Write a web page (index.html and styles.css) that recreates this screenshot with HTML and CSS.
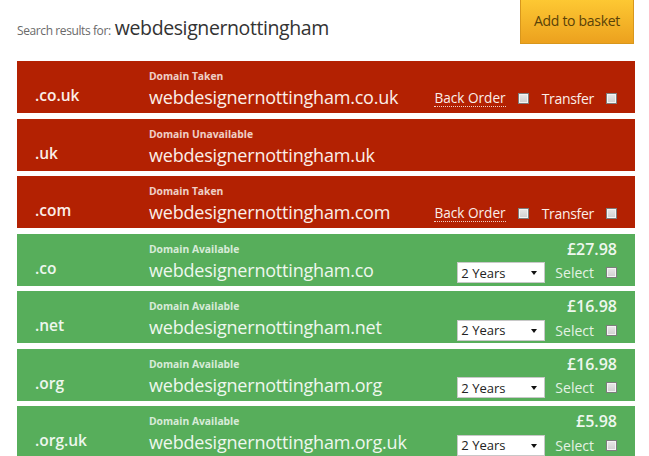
FILE: index.html
```html
<!DOCTYPE html>
<html>
<head>
<meta charset="utf-8">
<link rel="stylesheet" href="styles.css">
</head>
<body>
<div class="page">
  <header class="top">
    <div class="query"><span class="q-label">Search results for:</span> <span class="q-term">webdesignernottingham</span></div>
    <button class="basket">Add to basket</button>
  </header>
  <div class="results">
    <div class="row taken">
      <div class="tld">.co.uk</div>
      <div class="info"><div class="status">Domain Taken</div><div class="name">webdesignernottingham.co.uk</div></div>
      <div class="actions"><div class="opts"><span class="bo">Back Order</span><input type="checkbox" class="cb"><span class="tr">Transfer</span><input type="checkbox" class="cb"></div></div>
    </div>
    <div class="row taken">
      <div class="tld">.uk</div>
      <div class="info"><div class="status">Domain Unavailable</div><div class="name">webdesignernottingham.uk</div></div>
      <div class="actions"></div>
    </div>
    <div class="row taken">
      <div class="tld">.com</div>
      <div class="info"><div class="status">Domain Taken</div><div class="name">webdesignernottingham.com</div></div>
      <div class="actions"><div class="opts"><span class="bo">Back Order</span><input type="checkbox" class="cb"><span class="tr">Transfer</span><input type="checkbox" class="cb"></div></div>
    </div>
    <div class="row avail">
      <div class="tld">.co</div>
      <div class="info"><div class="status">Domain Available</div><div class="name">webdesignernottingham.co</div></div>
      <div class="actions"><div class="price">£27.98</div><div class="opts"><span class="sel"><select><option>2 Years</option></select></span><span class="pick">Select</span><input type="checkbox" class="cb"></div></div>
    </div>
    <div class="row avail">
      <div class="tld">.net</div>
      <div class="info"><div class="status">Domain Available</div><div class="name">webdesignernottingham.net</div></div>
      <div class="actions"><div class="price">£16.98</div><div class="opts"><span class="sel"><select><option>2 Years</option></select></span><span class="pick">Select</span><input type="checkbox" class="cb"></div></div>
    </div>
    <div class="row avail">
      <div class="tld">.org</div>
      <div class="info"><div class="status">Domain Available</div><div class="name">webdesignernottingham.org</div></div>
      <div class="actions"><div class="price">£16.98</div><div class="opts"><span class="sel"><select><option>2 Years</option></select></span><span class="pick">Select</span><input type="checkbox" class="cb"></div></div>
    </div>
    <div class="row avail">
      <div class="tld">.org.uk</div>
      <div class="info"><div class="status">Domain Available</div><div class="name">webdesignernottingham.org.uk</div></div>
      <div class="actions"><div class="price">£5.98</div><div class="opts"><span class="sel"><select><option>2 Years</option></select></span><span class="pick">Select</span><input type="checkbox" class="cb"></div></div>
    </div>
  </div>
</div>
</body>
</html>
```
FILE: styles.css
```css
html, body { margin: 0; padding: 0; background: #fff; }
body { font-family: "Open Sans", "DejaVu Sans", sans-serif; overflow: hidden; }
.page { padding: 0 14px 0 17px; }
.top { display: flex; justify-content: space-between; align-items: flex-start; height: 61px; }
.query { padding-top: 14px; white-space: nowrap; }
.q-label { font-size: 12px; color: #6a6a6a; letter-spacing: -0.4px; }
.q-term { font-size: 19.5px; color: #333; letter-spacing: -0.4px; margin-left: 0; }
.basket {
  width: 114px; height: 44px; margin-right: 1px;
  border: 1px solid #d8971c; border-top: 0;
  background: linear-gradient(#fdc833, #eca11e);
  color: #5a4208; font-family: "Open Sans", sans-serif; font-size: 14px;
  letter-spacing: -0.3px; padding: 0 0 2px;
}
.results { display: flex; flex-direction: column; gap: 5.5px; }
.row {
  height: 52px; display: grid; grid-template-columns: 114px 1fr auto;
  padding: 0 18px; color: #fbeee8;
}
.taken { background: #b32102; }
.avail { background: #57ae5b; color: #eef7ee; }
.tld { font-size: 15.5px; font-weight: 600; display: flex; align-items: center; padding-top: 16px; }
.info { display: flex; flex-direction: column; padding-top: 8px; }
.status { font-size: 10.3px; font-weight: 700; line-height: 14px; opacity: 0.85; }
.name { font-size: 18px; line-height: 24px; letter-spacing: -0.2px; padding-top: 2px; }
.actions { display: flex; flex-direction: column; align-items: flex-end; justify-content: flex-end; padding-bottom: 1px; }
.price { font-size: 16px; font-weight: 600; line-height: 20px; margin-bottom: 2px; }
.opts { display: flex; align-items: center; height: 24px; }
.taken .opts { margin-bottom: 2px; }
.bo { font-size: 13.6px; border-bottom: 1px dotted #f0d0c8; line-height: 16px; margin-right: 0; }
.tr { font-size: 14px; margin-left: 13px; letter-spacing: -0.3px; }
.pick { font-size: 14px; margin-left: 10px; color: #e4f2e4; }
.cb {
  -webkit-appearance: none; appearance: none; margin: 0 0 0 12px;
  width: 11px; height: 11px; border: 1px solid #7d7d7d; box-sizing: border-box;
  background: linear-gradient(#e8e8e8, #cfcfcf); box-shadow: inset 0 0 0 1px #f4f4f4;
}
.sel { position: relative; display: inline-block; margin-left: 2px; }
.sel select {
  -webkit-appearance: none; appearance: none; width: 88px; height: 21px;
  border: 1px solid #c8c8c8; background: #fff; border-radius: 0;
  font-family: "Open Sans", sans-serif; font-size: 13px; color: #222;
  padding: 0 0 0 3px; margin: 0; display: block;
}
.sel::after {
  content: ""; position: absolute; right: 8px; top: 9px;
  border-left: 3px solid transparent; border-right: 3px solid transparent; border-top: 4px solid #111;
}
```
